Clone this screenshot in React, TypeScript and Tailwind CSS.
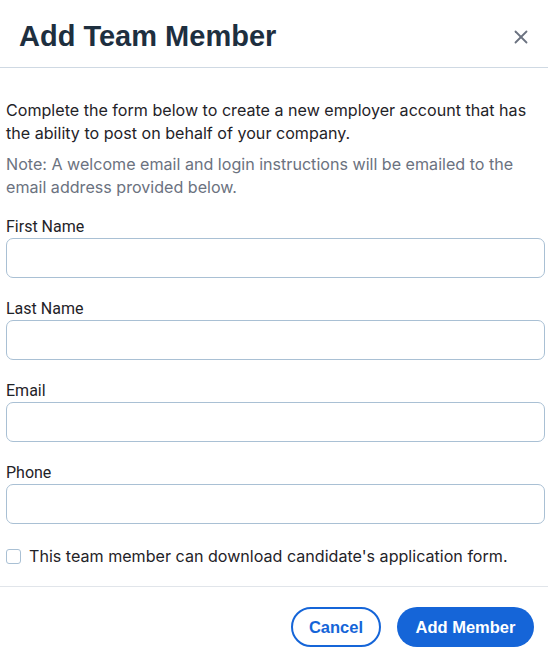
import { X } from "lucide-react";

const fields = ["First Name", "Last Name", "Email", "Phone"];

export default function App() {
  return (
    <div className="w-[548px] h-[654px] bg-white overflow-hidden">
      <header className="h-[68px] flex items-center justify-between pl-[19px] pr-[16px] pt-[9px] border-b border-[#cfd9e3]">
        <h1 className="text-[29px] font-bold text-[#1e2f3f] font-['Liberation_Sans',Arial,sans-serif] leading-none pb-[4px]">
          Add Team Member
        </h1>
        <button className="text-[#6b7280] pb-[2px]" aria-label="Close">
          <X className="h-[22px] w-[22px]" strokeWidth={2} />
        </button>
      </header>

      <div className="px-[6px] pt-[31px] font-['Inter',sans-serif]">
        <p className="text-[16.1px] leading-[23px] text-[#1f2328]">
          Complete the form below to create a new employer account that has the ability to post on behalf of your company.
        </p>
        <p className="mt-[8px] text-[16.1px] leading-[23px] text-[#6b7280]">
          Note: A welcome email and login instructions will be emailed to the email address provided below.
        </p>

        <div className="mt-[18px] flex flex-col gap-[21px]">
          {fields.map((f) => (
            <label key={f} className="flex flex-col">
              <span className="font-['Roboto',sans-serif] text-[16px] leading-[20px] text-[#1f2328] mb-[1px]">
                {f}
              </span>
              <input
                type="text"
                className="h-[40px] w-[539px] rounded-[7px] border border-[#a9c0d4] bg-white px-3 outline-none"
              />
            </label>
          ))}
        </div>

        <label className="mt-[21px] flex items-center gap-[8px]">
          <input
            type="checkbox"
            className="appearance-none h-[15px] w-[15px] rounded-[3px] border border-[#a9c0d4] bg-white"
          />
          <span className="text-[16.1px] leading-[22px] text-[#1f2328]">
            This team member can download candidate's application form.
          </span>
        </label>
      </div>

      <footer className="mt-[19px] border-t border-[#e1e5ea] pt-[20px] pr-[14px] flex justify-end gap-[16px] font-['Liberation_Sans',Arial,sans-serif]">
        <button className="h-[40px] w-[90px] rounded-full border-2 border-[#1565d8] bg-white text-[16.5px] font-bold text-[#1565d8]">
          Cancel
        </button>
        <button className="h-[40px] w-[137px] rounded-full bg-[#1565d8] text-[16.5px] font-bold text-white">
          Add Member
        </button>
      </footer>
    </div>
  );
}
